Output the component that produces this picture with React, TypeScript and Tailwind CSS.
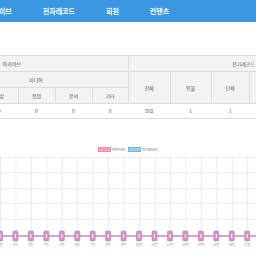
import React from 'react';

const navItems = ['아카이브', '전자레코드', '회원', '컨텐츠'];

const points = Array.from({ length: 17 }, (_, i) => i * 15.45);

const App: React.FC = () => {
  return (
    <div className="w-[256px] h-[256px] overflow-hidden bg-white font-['Noto_Sans_CJK_KR',sans-serif]">
      {/* top nav */}
      <div className="h-[22px] bg-[#3a97e2] flex items-center overflow-hidden">
        <div className="flex ml-[-14px] gap-[31px] text-white text-[7px] font-bold whitespace-nowrap">
          {navItems.map((item) => (
            <div key={item} className="shrink-0">
              {item}
            </div>
          ))}
        </div>
      </div>

      {/* stats table */}
      <div className="mt-[33px] overflow-hidden">
        <table className="ml-[-104px] w-[423px] border-collapse text-[5px] text-[#555] table-fixed">
          <colgroup>
            <col className="w-[48px]" />
            <col className="w-[37px]" />
            <col className="w-[37px]" />
            <col className="w-[37px]" />
            <col className="w-[37px]" />
            <col className="w-[36px]" />
            <col className="w-[42px]" />
            <col className="w-[41px]" />
            <col className="w-[38px]" />
            <col className="w-[40px]" />
            <col className="w-[40px]" />
            <col className="w-[30px]" />
          </colgroup>
          <thead>
            <tr className="h-[16px] bg-[#f3f3f3]">
              <th colSpan={6} className="font-normal border-t border-b border-[#dcdcdc] text-center">
                아카이브
              </th>
              <th colSpan={6} className="font-normal border border-[#dcdcdc] text-center">
                전기레코드
              </th>
            </tr>
            <tr className="h-[16px] bg-[#f3f3f3]">
              <th rowSpan={2} className="font-normal border-b border-[#dcdcdc]">전체</th>
              <th colSpan={5} className="font-normal border-b border-[#dcdcdc]">미디어</th>
              <th rowSpan={2} className="font-normal border border-[#dcdcdc]">전체</th>
              <th rowSpan={2} className="font-normal border border-[#dcdcdc]">인물</th>
              <th rowSpan={2} className="font-normal border border-[#dcdcdc]">단체</th>
              <th rowSpan={2} className="font-normal border border-[#dcdcdc]">사건</th>
              <th rowSpan={2} className="font-normal border border-[#dcdcdc]">기타</th>
              <th rowSpan={2} className="font-normal border border-[#dcdcdc]">기타</th>
            </tr>
            <tr className="h-[16px] bg-[#f3f3f3]">
              {['사진', '영상', '음원', '문서', '기타'].map((h) => (
                <th key={h} className="font-normal border-l border-b border-[#dcdcdc]">
                  {h}
                </th>
              ))}
            </tr>
          </thead>
          <tbody>
            <tr className="h-[15px] border-b border-[#dcdcdc]">
              {['0', '0', '0', '0', '0', '0', '592', '1', '1', '0', '0', '0'].map((v, i) => (
                <td key={i} className="text-center">
                  {v}
                </td>
              ))}
            </tr>
          </tbody>
        </table>
      </div>

      {/* chart legend */}
      <div className="mt-[28px] flex items-center ml-[98px] text-[3.5px] text-[#666] leading-none">
        <span className="w-[13px] h-[5px] bg-[#f7a6bd] border border-[#f48aa8]" />
        <span className="ml-[1px] mr-[3px]">아카이브</span>
        <span className="w-[13px] h-[5px] bg-[#9fcdf0] border border-[#74b4e6]" />
        <span className="ml-[1px]">전기레코드</span>
      </div>

      {/* chart */}
      <svg width="256" height="100" className="mt-[3px] block">
        {[2, 17, 33, 48, 64].map((y) => (
          <line key={y} x1="0" x2="256" y1={y + 0.5} y2={y + 0.5} stroke="#ececec" strokeWidth="1" />
        ))}
        {points.map((x) => (
          <line key={x} x1={x + 0.5} x2={x + 0.5} y1="0" y2="84" stroke="#ececec" strokeWidth="1" />
        ))}
        <line x1="0" x2="256" y1="81" y2="81" stroke="#c98ac5" strokeWidth="1.5" />
        {points.map((x, i) => (
          <g key={i}>
            <rect x={x - 2.5} y="76" width="5" height="10" rx="1" fill="#d592c6" stroke="#c27bb6" strokeWidth="0.6" />
            <rect x={x - 0.5} y="79" width="1" height="4" fill="#ffffff" />
            <text x={x} y="91" fontSize="3.2" fill="#888" textAnchor="middle">
              {i + 1}일
            </text>
          </g>
        ))}
      </svg>
    </div>
  );
};

export default App;
